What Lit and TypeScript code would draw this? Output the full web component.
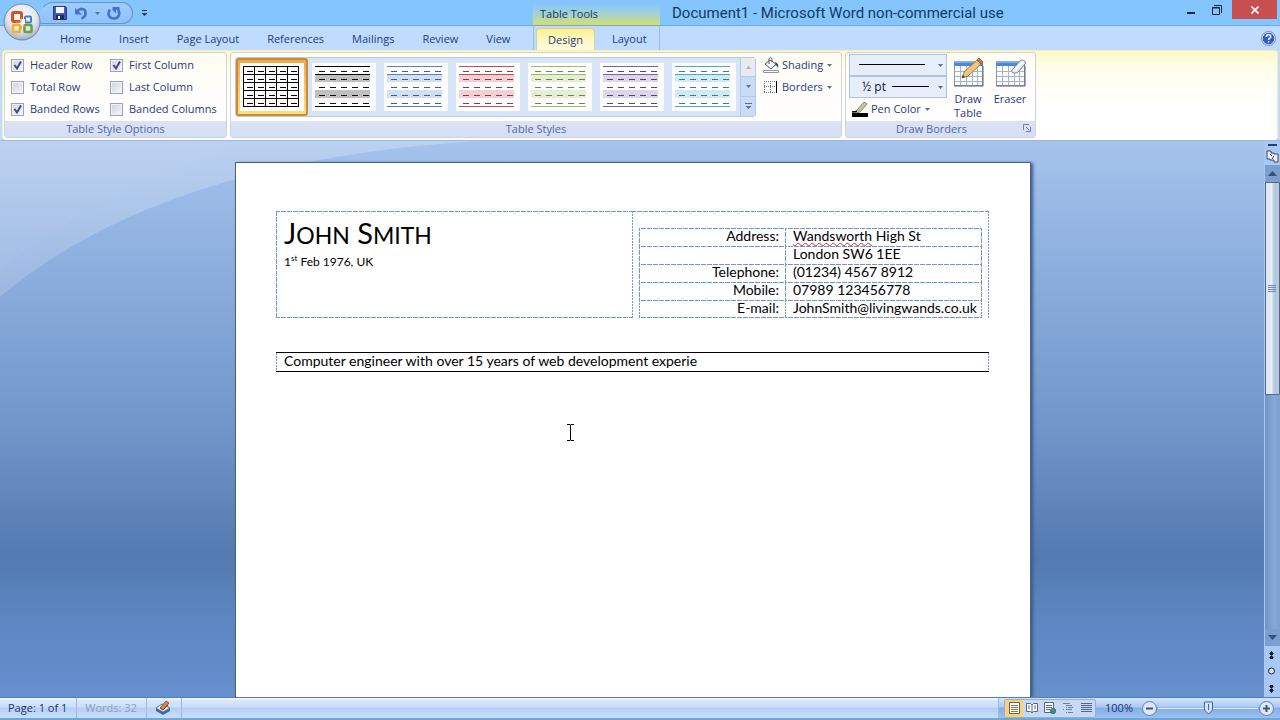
import { LitElement, html, svg, css } from "lit";
import { customElement } from "lit/decorators.js";
import { classMap } from "lit/directives/class-map.js";

const TABS = ["Home", "Insert", "Page Layout", "References", "Mailings", "Review", "View", "Design", "Layout"];

const OPTIONS = [
  { label: "Header Row", on: true },
  { label: "First Column", on: true },
  { label: "Total Row", on: false },
  { label: "Last Column", on: false },
  { label: "Banded Rows", on: true },
  { label: "Banded Columns", on: false },
];

const STYLES = [
  { name: "Table Grid", line: "#000", dash: "#000", band: "none", grid: true },
  { name: "Light Shading", line: "#000", dash: "#111", band: "#c0c0c0", grid: false },
  { name: "Light Shading Accent 1", line: "#5b7fb5", dash: "#3f5f92", band: "#d0dff2", grid: false },
  { name: "Light Shading Accent 2", line: "#bb5052", dash: "#8c3a40", band: "#f3d0d4", grid: false },
  { name: "Light Shading Accent 3", line: "#a3bb62", dash: "#6f8646", band: "#e6eed5", grid: false },
  { name: "Light Shading Accent 4", line: "#7565a0", dash: "#54457c", band: "#ddd6ea", grid: false },
  { name: "Light Shading Accent 5", line: "#53a5ba", dash: "#377a92", band: "#d0eaf3", grid: false },
];

const CONTACT = [
  { label: "Address:", value: html`<span class="misspelt">Wandsworth</span> High St` },
  { label: "", value: "London SW6 1EE" },
  { label: "Telephone:", value: "(01234) 4567 8912" },
  { label: "Mobile:", value: "07989 123456778" },
  { label: "E-mail:", value: "JohnSmith@livingwands.co.uk" },
];

const caret = svg`<path d="M0 0h5L2.500 3z" fill="#5a6fa0"/>`;
const caretIcon = html`<svg class="caret" width="5" height="3" viewBox="0 0 5 3" aria-hidden="true">${caret}</svg>`;

function stylePreview(s: (typeof STYLES)[number]) {
  const rows = [8, 16, 24, 32, 40];
  const cols = [7, 18, 29, 40, 51];
  return html`<svg class="thumb" width="64" height="48" viewBox="0 0 64 48" shape-rendering="crispEdges" aria-hidden="true">
    <rect width="64" height="48" fill="#fff" />
    ${s.grid
      ? svg`${[3, 11, 19, 27, 35, 43].map((y) => svg`<rect x="3" y=${y} width="56" height="1" fill=${s.line}/>`)}
        ${[3, 14, 25, 36, 47, 58].map((x) => svg`<rect x=${x} y="3" width="1" height="41" fill=${s.line}/>`)}`
      : svg`<rect x="3" y="12" width="55" height="7" fill=${s.band}/><rect x="3" y="27" width="55" height="8" fill=${s.band}/>
        ${[3, 11, 43].map((y) => svg`<rect x="3" y=${y} width="55" height="1" fill=${s.line}/>`)}`}
    ${rows.map((y) => cols.map((x) => svg`<rect x=${x} y=${y} width="6" height="1" fill=${s.dash}/>`))}
  </svg>`;
}

const tableIcon = svg`
  <rect x="1.500" y="3.500" width="28" height="24" fill="#fbfcff" stroke="#8b96ad"/>
  <rect x="1" y="3" width="29" height="5" fill="#4f86d8"/>
  <rect x="1" y="3" width="29" height="2" fill="#7fadee"/>
  <path d="M2 13.500h27M2 18.500h27M2 23.500h27M7.500 8v19M13.500 8v19M19.500 8v19M24.500 8v19" stroke="#a9b4c8"/>
  <path d="M1 28h29v-20" stroke="#5c6478" fill="none"/>`;

@customElement("app-root")
export class AppRoot extends LitElement {
  static styles = css`
    :host {
      display: flex;
      flex-direction: column;
      height: 100vh;
      overflow: hidden;
      font: 11px/16px "Open Sans", "Noto Sans", sans-serif;
      color: #1e3c7c;
      position: relative;
      background: #bfdbff;
    }
    * { box-sizing: border-box; }
    button, select, input { font: inherit; color: inherit; margin: 0; }
    button {
      background: none;
      border: 0;
      padding: 0;
      display: flex;
      align-items: center;
      white-space: nowrap;
    }
    svg { display: block; flex: none; }

    .titlebar {
      display: flex;
      height: 26px;
      flex: none;
      background: #84c5ff;
      border-bottom: 1px solid #6da9e6;
    }
    .quick { width: 533px; flex: none; padding: 2px 0 0 38px; display: flex; align-items: flex-start; gap: 8px; }
    .pill {
      width: 95px;
      height: 22px;
      border: 1px solid #6f93c4;
      border-left-color: transparent;
      border-radius: 16px 11px 11px 4px;
      background: linear-gradient(#9dcdfc, #8dc3fb);
      display: flex;
      align-items: center;
      padding-left: 14px;
      gap: 7px;
    }
    .more { height: 22px; }
    .context {
      width: 127px;
      flex: none;
      padding: 6px 0 0 7px;
      background: linear-gradient(#84c5ff 10%, #9fd0d8 50%, #c6dc8c 88%, #e0dc50);
      color: #16365f;
    }
    .title { flex: 1; margin: 0; padding-left: 12px; font: 15px/27px Roboto, sans-serif; color: #123a5e; white-space: nowrap; }
    .window { display: flex; align-items: flex-start; padding-right: 3px; }
    .window button { width: 26px; height: 19px; justify-content: center; }
    .window .close { width: 45px; background: #c84f50; margin-left: 2px; }

    .office { position: absolute; left: 2px; top: 2px; z-index: 2; }

    .tabs { display: flex; height: 24px; flex: none; padding: 0 4px 0 45px; background: #bfdbff; }
    .tab { padding: 2px 14px 0; height: 24px; }
    .design {
      margin: 2px 3px 0 2px;
      padding: 0 11px;
      height: 22px;
      border: 1px solid #d9cf90;
      border-bottom: 0;
      border-radius: 4px 4px 0 0;
      background: linear-gradient(#fff08a, #fdf6bc 40%, #fffbe0);
    }
    .contextual { display: flex; width: 127px; border: solid #9cc0d8; border-width: 0 1px; }
    .tabs .help { margin-left: auto; }
    .main-tabs { display: flex; width: 488px; padding-left: 1px; }

    .ribbon {
      flex: none;
      display: flex;
      gap: 4px;
      height: 90px;
      margin: 0 2px;
      padding: 2px 2px 1px;
      border: 1px solid #f5efb0;
      border-bottom-color: #fff;
      border-radius: 4px;
      background: linear-gradient(#fff9c8, #fffdec 20%, #fff 60%);
    }
    .group {
      display: flex;
      flex-direction: column;
      justify-content: space-between;
      border: 1px solid #ccd2de;
      border-radius: 3px;
      background: linear-gradient(#fffdf0, #fffdfc 50%, #fff);
      margin: -1px 0 0 -1px;
    }
    .group-name {
      display: flex;
      flex: none;
      justify-content: center;
      position: relative;
      height: 16px;
      margin: 0;
      font: inherit;
      color: #5167a4;
      background: linear-gradient(#dde3f4, #d3def5);
    }
    .w3 .group-name { padding-right: 18px; }
    .group-name button { position: absolute; right: 4px; top: 3px; }
    .options {
      display: grid;
      grid-template-columns: 99px auto;
      grid-auto-rows: 22px;
      padding: 1px 8px 0 6px;
    }
    .options label { display: flex; align-items: center; gap: 6px; white-space: nowrap; }
    .options input {
      appearance: none;
      width: 13px;
      height: 13px;
      border: 1px solid #9aa3bb;
      background: linear-gradient(135deg, #cdd2dc, #f6f7fa);
      box-shadow: inset 0 0 0 1px #f0f2f8;
    }
    .options input:checked {
      background: url("data:image/svg+xml,%3Csvg xmlns='http://www.w3.org/2000/svg' width='11' height='11'%3E%3Cpath d='M2.500 5l2.500 3.500L9 1.500' fill='none' stroke='%23414a80' stroke-width='2'/%3E%3C/svg%3E") center / 11px 11px, linear-gradient(135deg, #cdd2ec, #f6f7fa);
    }
    .w1 { width: 223px; }
    .w2 { width: 612px; }
    .w3 { width: 191px; }
    .table-styles { display: flex; padding: 4px 0 0 4px; }
    .gallery {
      display: flex;
      height: 60px;
      border: 1px solid #b5c9e4;
      border-radius: 3px;
      background: #d8e5f9;
    }
    .style { width: 72px; height: 58px; justify-content: center; }
    .style.selected {
      border: 2px solid #c98b35;
      border-radius: 3px;
      background: linear-gradient(#f0a94c, #fbc36c 50%, #fde07a);
    }
    .arrows { display: grid; grid-template-rows: repeat(3, 1fr); width: 15px; border-left: 1px solid #b5c9e4; background: #c9dbf6; }
    .arrows button { justify-content: center; border-bottom: 1px solid #b5c9e4; }
    .arrows button:first-child { background: #e6ebf4; }
    .arrows button:last-child { border-bottom: 0; }
    .paint { display: grid; grid-auto-rows: 22px; margin-top: -3px; padding-left: 7px; }
    .command { gap: 3px; }
    .command .caret { margin-left: 1px; }
    .borders-tools { display: flex; padding: 1px 0 0 3px; }
    .pen { display: grid; grid-auto-rows: 22px; width: 98px; }
    select {
      appearance: none;
      height: 22px;
      width: 98px;
      padding: 0 0 0 12px;
      border: 1px solid #b0c2e0;
      border-radius: 0;
    }
    .pen select { color: #101a3c; font-size: 12px; }
    .line-style {
      background: url("data:image/svg+xml,%3Csvg xmlns='http://www.w3.org/2000/svg' width='96' height='20'%3E%3Cpath d='M9 9.500h66' stroke='%23000'/%3E%3Cpath d='M88 9h5l-2.500 3z' fill='%235a6fa0'/%3E%3C/svg%3E") #e6edfb;
    }
    .line-weight {
      background: url("data:image/svg+xml,%3Csvg xmlns='http://www.w3.org/2000/svg' width='96' height='20'%3E%3Cpath d='M42 9.500h37' stroke='%23000'/%3E%3Cpath d='M88 9h5l-2.500 3z' fill='%235a6fa0'/%3E%3C/svg%3E") #e6edfb;
    }
    .pen .command { padding-left: 3px; }
    .big { flex-direction: column; width: 42px; padding-top: 4px; line-height: 14px; }
    .big span { white-space: normal; text-align: center; }

    .workspace {
      flex: 1;
      min-height: 0;
      display: grid;
      grid-template-columns: 1fr 16px;
      border-top: 1px solid #9db9e3;
      background:
        url("data:image/svg+xml,%3Csvg xmlns='http://www.w3.org/2000/svg' width='480' height='165'%3E%3Cdefs%3E%3ClinearGradient id='g' x1='0' y1='0' x2='0' y2='1'%3E%3Cstop offset='0' stop-color='%23fff' stop-opacity='.24'/%3E%3Cstop offset='1' stop-color='%23fff' stop-opacity='.16'/%3E%3C/linearGradient%3E%3C/defs%3E%3Cpath d='M0 0H478Q160 20 0 156z' fill='url(%23g)'/%3E%3Cpath d='M0 0H240C180 30 60 70 0 132z' fill='%23fff' fill-opacity='.03'/%3E%3C/svg%3E") no-repeat,
        linear-gradient(#a5c3ec, #8fb1e0 20%, #7397cb 50%, #537ab1 75%, #5c86c0 85%, #6690ce);
    }
    .canvas { display: flex; justify-content: center; padding: 21px 0 0 2px; min-width: 0; overflow: hidden; }
    .page {
      position: relative;
      width: 796px;
      flex: none;
      padding: 48px 41px 0 40px;
      border: 1px solid #4f6180;
      border-bottom: 0;
      background: #fff;
      box-shadow: 2px 1px 3px #3c5a8a;
      color: #000;
      font: 14px/14px Lato, sans-serif;
    }
    table { border-collapse: separate; border-spacing: 0; width: 100%; }
    td, th { padding: 0; font-weight: 400; text-align: left; vertical-align: top; }
    .guide {
      border: 0 solid #6d97cf;
      border-image: url("data:image/svg+xml,%3Csvg xmlns='http://www.w3.org/2000/svg' width='8' height='8'%3E%3Cpath d='M0 .5h3M4 .5h2M7 .5h1M0 7.500h3M4 7.500h2M7 7.500h1M.5 0v3M.5 4v2M.5 7v1M7.500 0v3M7.500 4v2M7.500 7v1' stroke='%236d97cf'/%3E%3C/svg%3E") 1 repeat;
    }
    .who { width: 356px; height: 107px; padding: 4px 0 0 7px; border-width: 1px 0 1px 1px; }
    .contact-cell { padding: 16px 6px 0; border-width: 1px 1px 0 1px; }
    .name { margin: 0; font-size: 29px; line-height: 34px; font-weight: 400; }
    .name span { font-size: 23px; }
    .born { margin: 2px 0 0; font-size: 12px; line-height: 16px; }
    sup { font-size: 8px; line-height: 8px; }
    .contact th { width: 146px; text-align: right; padding-right: 6px; border-width: 1px 0 0 1px; height: 18px; }
    .contact td { padding-left: 7px; border-width: 1px 1px 0 1px; height: 18px; white-space: nowrap; }
    .contact tr:last-child .guide { border-bottom-width: 1px; }
    .misspelt { text-decoration: underline wavy #d02828 1px; text-decoration-skip-ink: none; text-underline-offset: 1px; }
    .summary { margin-top: 34px; border: solid #000; border-width: 1px 0; }
    .summary td { padding: 1px 7px 0; height: 18px; border-width: 0 1px; }
    .ibeam { position: absolute; left: 330px; top: 261px; }

    .scroll { display: flex; flex-direction: column; align-items: center; background: #a9c8f5; color: #14284c; }
    .scroll button { justify-content: center; width: 16px; }
    .track { flex: 1; width: 15px; display: flex; flex-direction: column; background: linear-gradient(90deg, #6f93c4, #86a8d6 60%, #7d9fd0); }
    .track button { width: 15px; height: 17px; background: #7d9fd0; }
    .thumb-v {
      height: 213px;
      display: grid;
      place-items: center;
      border: 1px solid #55688c;
      border-radius: 1px;
      background: linear-gradient(90deg, #dbe6f4, #e6eef6 45%, #b7c9dc 60%, #b5c8de);
    }
    .track button:last-child { margin-top: auto; }

    .status {
      flex: none;
      display: flex;
      height: 23px;
      border-top: 1px solid #4f7cc0;
      border-bottom: 2px solid #6fa6d4;
      background: linear-gradient(#f4f8ff, #d6e5fb 15%, #cbdef8 45%, #b4cff4 50%, #c9defa);
      color: #1b3370;
      align-items: stretch;
    }
    .status > * { border-right: 1px solid #9db9e0; padding: 0 9px 0 8px; }
    .status .muted { color: #8d9cb8; }
    .status .spacer { flex: 1; }
    .status .tools { display: flex; align-items: center; border: 0; padding: 0 5px; background: linear-gradient(#d4e5fc, #a9c9f3 45%, #85aee6 50%, #9cc0f0); }
    .views { display: flex; border: 1px solid #93afd8; border-radius: 2px; background: #c6daf5; }
    .views button { width: 18px; height: 17px; justify-content: center; }
    .views .on { background: #fbcf74; }
    .tools .pct { padding: 0 8px 0 9px; }
    .range { appearance: none; width: 100px; height: 18px; background: linear-gradient(#dcebff, #dcebff) center / 100% 1px no-repeat; }
    .range::-webkit-slider-thumb {
      appearance: none;
      width: 11px;
      height: 14px;
      background: url("data:image/svg+xml,%3Csvg xmlns='http://www.w3.org/2000/svg' width='11' height='14'%3E%3Cpath d='M1.500 1h8v8l-4 4-4-4z' fill='%23d4e4f8' stroke='%2344689c'/%3E%3Cpath d='M5.500 3v6' stroke='%2344689c'/%3E%3C/svg%3E");
    }
  `;

  private ribbonTab(name: string) {
    return html`<button class=${classMap({ tab: true, design: name === "Design" })} role="tab" aria-selected=${name === "Design"}>${name}</button>`;
  }

  private titleBar() {
    return html`
      <header class="titlebar">
        <div class="quick">
          <div class="pill">
            <button aria-label="Save">
              <svg width="14" height="14" viewBox="0 0 14 14"><path d="M.5.5h12l1 1v12H.5z" fill="#4756b4" stroke="#2d3a86" /><path d="M3 1h8v6H3z" fill="#f2f5ff" /><path d="M3 9h8v5H3z" fill="#1e2a66" /><path d="M5 10h2v3H5z" fill="#fff" /></svg>
            </button>
            <button aria-label="Undo">
              <svg width="14" height="14" viewBox="0 0 14 14"><path d="M3 5.500C7 1 12 3 11.500 7.500 11.300 10 9.500 12 7.500 12.500" fill="none" stroke="#4670cc" stroke-width="2.600" /><path d="M1 2v6.500h7z" fill="#4670cc" /></svg>
            </button>
            ${caretIcon}
            <button aria-label="Repeat">
              <svg width="14" height="14" viewBox="0 0 14 14"><path d="M3 3.500C-.5 9 3 12.500 7 12.500s7-4 4-9" fill="none" stroke="#4670cc" stroke-width="2.600" /><path d="M5.500 1h7v2.500L9 4v3.500L5.500 4z" fill="#4670cc" /></svg>
            </button>
          </div>
          <button class="more" aria-label="Customize Quick Access Toolbar">
            <svg width="7" height="6" viewBox="0 0 7 6"><path d="M1 0h5v1H1zM0.500 3h6l-3 3z" fill="#1b3a66" /></svg>
          </button>
        </div>
        <div class="context">Table Tools</div>
        <h1 class="title">Document1 - Microsoft Word non-commercial use</h1>
        <div class="window">
          <button aria-label="Minimize"><svg width="10" height="10" viewBox="0 0 10 10"><path d="M1 7h8v2H1z" fill="#12283c" /></svg></button>
          <button aria-label="Restore"><svg width="10" height="10" viewBox="0 0 10 10"><path d="M.5 2.500h7v7h-7zM2 .5h7.500V8M.5 3h7" fill="none" stroke="#12283c" /></svg></button>
          <button class="close" aria-label="Close"><svg width="8" height="8" viewBox="0 0 8 8"><path d="M.5.5l7 7M7.500.5l-7 7" stroke="#fff" stroke-width="1.600" /></svg></button>
        </div>
      </header>
      <button class="office" aria-label="Office Button">
        <svg width="40" height="40" viewBox="0 0 40 40">
          <defs>
            <radialGradient id="orb" cx=".5" cy=".35" r=".65"><stop offset="0" stop-color="#fff" /><stop offset=".6" stop-color="#e2e6ee" /><stop offset="1" stop-color="#a3aec4" /></radialGradient>
          </defs>
          <circle cx="20" cy="20" r="18" fill="url(#orb)" stroke="#7286a8" />
          <g fill="none">
            <rect x="10.500" y="10.500" width="9" height="9" rx="1.500" stroke="#dd4f1e" stroke-width="3" />
            <rect x="23" y="14.500" width="6" height="6" rx="1" stroke="#3f7fd0" stroke-width="2" />
            <rect x="11" y="23" width="7" height="7" rx="1" stroke="#f0b32c" stroke-width="2.600" />
            <rect x="22.500" y="23" width="7" height="7" rx="1" stroke="#6aa43c" stroke-width="2.600" />
          </g>
          <path d="M18 17h5v5h-5z" fill="#f6f7fa" />
          <path d="M19 15v5h-5M23 19h3M19 24v3M23 23v3" fill="none" stroke="#e5893a" />
        </svg>
      </button>`;
  }

  private ribbon() {
    return html`
      <nav class="tabs" role="tablist">
        <div class="main-tabs">${TABS.slice(0, 7).map((t) => this.ribbonTab(t))}</div>
        <div class="contextual">${TABS.slice(7).map((t) => this.ribbonTab(t))}</div>
        <button class="help" aria-label="Help">
          <svg width="15" height="15" viewBox="0 0 15 15"><circle cx="7.500" cy="7.500" r="6.500" fill="#2c5cc8" stroke="#dfe9fb" stroke-width="1.400" /><circle cx="7.500" cy="7.500" r="7" fill="none" stroke="#4a64a0" stroke-width=".7" /><path d="M5.300 6c0-3 4.500-3 4.500-.4 0 1.700-2.200 1.500-2.200 3.300M7.600 10v1.500" fill="none" stroke="#fff" stroke-width="1.500" /></svg>
        </button>
      </nav>
      <section class="ribbon">
        <div class="group w1">
          <div class="options">
            ${OPTIONS.map((o) => html`<label><input type="checkbox" .checked=${o.on} />${o.label}</label>`)}
          </div>
          <h2 class="group-name">Table Style Options</h2>
        </div>
        <div class="group w2">
          <div class="table-styles">
            <div class="gallery">
              ${STYLES.map((s, i) => html`<button class=${classMap({ style: true, selected: i === 0 })} aria-label=${s.name}>${stylePreview(s)}</button>`)}
              <div class="arrows">
                <button aria-label="Previous styles"><svg width="5" height="3" viewBox="0 0 5 3"><path d="M0 3h5L2.500 0z" fill="#a9b0c0" /></svg></button>
                <button aria-label="Next styles">${caretIcon}</button>
                <button aria-label="More styles"><svg width="7" height="6" viewBox="0 0 7 6"><path d="M0 0h7v1H0zM.5 3h6l-3 3z" fill="#5a6fa0" /></svg></button>
              </div>
            </div>
            <div class="paint">
              <button class="command">
                <svg width="16" height="16" viewBox="0 0 16 16"><path d="M2 7l5-4 6 4-5 5z" fill="#f4f6fb" stroke="#4c5878" /><path d="M6 7V2.500C6 0 9 0 9 2.500V5" fill="none" stroke="#4c5878" /><path d="M12 5c3 1 4 3 3 6l-2-3-4 3 4-4z" fill="#34477c" /><path d="M.5 13.500h15v2H.5z" fill="#fff" stroke="#8b93a4" /></svg>
                Shading ${caretIcon}
              </button>
              <button class="command">
                <svg width="16" height="16" viewBox="0 0 16 16"><path d="M1 2.500h12M1 7.500h12M1 13.500h12M1.500 2v12M7.500 2v12" stroke="#6b7390" stroke-dasharray="1 1" /><path d="M13.500 2v12" stroke="#000" /></svg>
                Borders ${caretIcon}
              </button>
            </div>
          </div>
          <h2 class="group-name">Table Styles</h2>
        </div>
        <div class="group w3">
          <div class="borders-tools">
            <div class="pen">
              <select class="line-style" aria-label="Line Style"><option label=" " value="solid"></option></select>
              <select class="line-weight" aria-label="Line Weight"><option>½ pt</option></select>
              <button class="command">
                <svg width="16" height="16" viewBox="0 0 16 16"><path d="M0 12h16v4H0z" fill="#000" /><path d="M5 9l7-8 3 2-7 8-4 1z" fill="#c9c79a" stroke="#6b6f60" stroke-width=".8" /><path d="M0 11l5-1-1 1z" fill="#000" stroke="#000" /></svg>
                Pen Color ${caretIcon}
              </button>
            </div>
            <button class="big">
              <svg width="31" height="34" viewBox="0 0 31 34">${tableIcon}<path d="M9 20l2-6L24 2l4 4-13 12z" fill="#f1c573" stroke="#8a6a34" stroke-width=".8" /><path d="M24 2l2-2 4 4-2 2z" fill="#d6705c" stroke="#7d5348" stroke-width=".8" /><path d="M9 20l1-3 2 2z" fill="#333" /></svg>
              <span>Draw<br />Table</span>
            </button>
            <button class="big">
              <svg width="31" height="34" viewBox="0 0 31 34">${tableIcon}<path d="M17 12l8-9c2-2 7 0 5 3l-7 8c-2 2-8 1-6-2z" fill="#e6edf8" stroke="#6d7f9f" /><path d="M20 12l8-8" stroke="#fff" stroke-width="2" /></svg>
              <span>Eraser</span>
            </button>
          </div>
          <h2 class="group-name">Draw Borders
            <button aria-label="Borders and Shading dialog"><svg width="8" height="8" viewBox="0 0 8 8"><path d="M.5 6V.5H6M3 3l3 3M7.500 3v4.500H3" fill="none" stroke="#7080a8" /></svg></button>
          </h2>
        </div>
      </section>`;
  }

  private document() {
    return html`
      <article class="page">
        <table>
          <tr>
            <td class="who guide">
              <h2 class="name">J<span>OHN</span> S<span>MITH</span></h2>
              <p class="born">1<sup>st</sup> Feb 1976, UK</p>
            </td>
            <td class="contact-cell guide">
              <table class="contact">
                ${CONTACT.map((c) => html`<tr><th class="guide">${c.label}</th><td class="guide">${c.value}</td></tr>`)}
              </table>
            </td>
          </tr>
        </table>
        <table class="summary">
          <tr><td class="guide">Computer engineer with over 15 years of web development experie</td></tr>
        </table>
        <svg class="ibeam" width="9" height="17" viewBox="0 0 9 17" aria-hidden="true"><path d="M1 .5h3l.5.5.5-.5h3M4.500 1v15M1 16.500h3l.5-.5.5.5h3" fill="none" stroke="#000" /></svg>
      </article>`;
  }

  private scrollbar() {
    return html`
      <aside class="scroll">
        <button aria-label="Split"><svg width="16" height="7" viewBox="0 0 16 7"><path d="M4 3h9v2H4z" fill="#24406c" /></svg></button>
        <button aria-label="View Ruler"><svg width="14" height="17" viewBox="0 0 14 17"><path d="M2 3h4v2h3v1h4v8H9v-2H5v-1H2z" fill="#eef2fa" stroke="#3c4668" /><path d="M5 6l2 2M9 8l-2 3" stroke="#3c4668" /></svg></button>
        <div class="track">
          <button aria-label="Scroll up"><svg width="9" height="5" viewBox="0 0 9 5"><path d="M0 5h9L4.500 0z" fill="#33507e" /></svg></button>
          <div class="thumb-v"><svg width="8" height="8" viewBox="0 0 8 8"><path d="M0 .5h8M0 2.500h8M0 4.500h8M0 6.500h8" stroke="#7488a6" /></svg></div>
          <button aria-label="Scroll down"><svg width="9" height="5" viewBox="0 0 9 5"><path d="M0 0h9L4.500 5z" fill="#33507e" /></svg></button>
        </div>
        <button aria-label="Previous Page"><svg width="16" height="17" viewBox="0 0 16 17"><path d="M5 8l2.500-3L10 8zM5 12l2.500-3 2.500 3zM6 8h3v1H6zM6 12h3v1H6z" fill="#0c1830" /></svg></button>
        <button aria-label="Select Browse Object"><svg width="16" height="17" viewBox="0 0 16 17"><circle cx="7.500" cy="8" r="3" fill="#dbe4d8" stroke="#1c2c4c" /></svg></button>
        <button aria-label="Next Page"><svg width="16" height="17" viewBox="0 0 16 17"><path d="M5 6h5L7.500 9zM5 10h5l-2.500 3zM6 5h3v1H6zM6 9h3v1H6z" fill="#0c1830" /></svg></button>
      </aside>`;
  }

  private zoomButton(label: string, d: string) {
    return html`<button aria-label=${label}><svg width="17" height="17" viewBox="0 0 17 17"><circle cx="8.500" cy="8.500" r="7" fill="#dce8f8" stroke="#5f7fb0" /><path d=${d} stroke="#3c5480" stroke-width="2" /></svg></button>`;
  }

  private statusBar() {
    return html`
      <footer class="status">
        <button>Page: 1 of 1</button>
        <button class="muted">Words: 32</button>
        <button aria-label="Proofing"><svg width="17" height="16" viewBox="0 0 17 16"><path d="M1 8l6-4 8 4v3l-7 4-7-4z" fill="#3f64b4" /><path d="M1 8l6-4 8 4-7 4z" fill="#f4f1e6" stroke="#53618c" stroke-width=".8" /><path d="M5 8l6-7 3 2-6 7z" fill="#d8843c" stroke="#74502c" stroke-width=".8" /><path d="M5 7l3 3 5-5" fill="none" stroke="#6b4420" /></svg></button>
        <div class="spacer"></div>
        <div class="tools">
          <div class="views">
            <button class="on" aria-label="Print Layout"><svg width="11" height="12" viewBox="0 0 11 12"><path d="M.5.5h10v11H.5z" fill="#fff" stroke="#6b6450" /><path d="M2 3.500h7M2 5.500h7M2 7.500h7M2 9.500h7" stroke="#83795c" /></svg></button>
            <button aria-label="Full Screen Reading"><svg width="12" height="12" viewBox="0 0 12 12"><path d="M.5 1.500h4L6 3l1.500-1.500h4v8h-4L6 11 4.500 9.500h-4z" fill="#fff" stroke="#5b6680" /><path d="M6 3v8M2 4h2M2 6h2M8 4h2M8 6h2" stroke="#5b6680" /></svg></button>
            <button aria-label="Web Layout"><svg width="12" height="12" viewBox="0 0 12 12"><path d="M.5.5h9v10h-9z" fill="#fff" stroke="#5b6680" /><path d="M2 3.500h6M2 5.500h6M2 7.500h4" stroke="#5b6680" /><circle cx="9" cy="9" r="2.800" fill="#3f8d7c" stroke="#315c80" stroke-width=".6" /></svg></button>
            <button aria-label="Outline"><svg width="11" height="12" viewBox="0 0 11 12"><path d="M0 1.500h7M3 3.500h6M3 5.500h1M5 5.500h5M0 7.500h1M3 7.500h6M3 10.500h1M5 10.500h5" stroke="#6f7f9f" /></svg></button>
            <button aria-label="Draft"><svg width="11" height="12" viewBox="0 0 11 12"><path d="M0 1.500h11M0 3.500h11M0 5.500h11M0 7.500h11M0 9.500h11" stroke="#566584" /></svg></button>
          </div>
          <button class="pct">100%</button>
          ${this.zoomButton("Zoom Out", "M5 8.500h7")}
          <input class="range" type="range" min="0" max="100" value="50" aria-label="Zoom" />
          ${this.zoomButton("Zoom In", "M5 8.500h7M8.500 5v7")}
        </div>
      </footer>`;
  }

  render() {
    return html`
      ${this.titleBar()} ${this.ribbon()}
      <main class="workspace">
        <div class="canvas">${this.document()}</div>
        ${this.scrollbar()}
      </main>
      ${this.statusBar()}`;
  }
}
